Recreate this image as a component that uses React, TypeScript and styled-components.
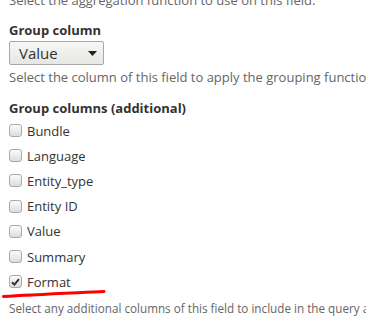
import React from 'react';
import styled, { createGlobalStyle } from 'styled-components';

const GlobalStyle = createGlobalStyle`
  html, body {
    margin: 0;
    padding: 0;
    background: #fff;
    overflow: hidden;
  }
  body {
    font-family: 'Open Sans', 'Liberation Sans', sans-serif;
    color: #333;
  }
`;

const Page = styled.div`
  position: relative;
  width: 366px;
  height: 331px;
  overflow: hidden;
`;

const Form = styled.div`
  display: flex;
  flex-direction: column;
  margin-top: -9px;
  padding-left: 9px;
  white-space: nowrap;
`;

const Description = styled.div<{ $top?: number; $size?: number }>`
  font-size: ${(p) => p.$size ?? 13}px;
  line-height: 18px;
  color: #666;
  margin-top: ${(p) => p.$top ?? 0}px;
`;

const Heading = styled.div<{ $top: number }>`
  font-size: 13px;
  font-weight: 700;
  line-height: 18px;
  color: #333;
  margin-top: ${(p) => p.$top}px;
`;

const SelectBox = styled.div`
  display: flex;
  align-items: center;
  justify-content: space-between;
  box-sizing: border-box;
  width: 95px;
  height: 24px;
  margin-top: 2px;
  padding: 0 6px 0 9px;
  border: 1px solid #a8a8a8;
  border-radius: 2px;
  background: linear-gradient(#f7f7f5, #e6e6e3);
  font-size: 15px;
  color: #333;
`;

const CheckList = styled.div`
  display: flex;
  flex-direction: column;
  margin-top: 1px;
`;

const Row = styled.label`
  display: flex;
  align-items: center;
  gap: 5px;
  height: 25.2px;
  font-size: 13px;
  color: #333;
`;

const Box = styled.span`
  display: flex;
  align-items: center;
  justify-content: center;
  box-sizing: border-box;
  width: 13px;
  height: 13px;
  border: 1px solid #a9a9a9;
  border-radius: 3px;
  background: linear-gradient(#fcfcfc, #dcdcdc);
`;

const Mark = styled.svg`
  position: absolute;
  left: 2px;
  top: 288px;
`;

const columns = ['Bundle', 'Language', 'Entity_type', 'Entity ID', 'Value', 'Summary', 'Format'];

function App() {
  return (
    <Page>
      <GlobalStyle />
      <Form>
        <Description>Select the aggregation function to use on this field.</Description>
        <Heading $top={12}>Group column</Heading>
        <SelectBox>
          <span>Value</span>
          <svg width="9" height="5" viewBox="0 0 9 5">
            <path d="M0 0 H9 L4.5 5 Z" fill="#222" />
          </svg>
        </SelectBox>
        <Description $top={3}>Select the column of this field to apply the grouping function.</Description>
        <Heading $top={13}>Group columns (additional)</Heading>
        <CheckList>
          {columns.map((c) => (
            <Row key={c}>
              <Box>
                {c === 'Format' && (
                  <svg width="9" height="8" viewBox="0 0 9 8">
                    <path d="M1 4.2 L3.4 6.6 L8 1.2" stroke="#333" strokeWidth="2" fill="none" />
                  </svg>
                )}
              </Box>
              {c}
            </Row>
          ))}
        </CheckList>
        <Description $top={5} $size={11.7}>
          Select any additional columns of this field to include in the query and to group on.
        </Description>
      </Form>
      <Mark width="104" height="12" viewBox="0 0 104 12">
        <path d="M1.5 8.5 C30 6.5 70 5 102 3.5" stroke="#f00" strokeWidth="3" strokeLinecap="round" fill="none" />
      </Mark>
    </Page>
  );
}

export default App;
